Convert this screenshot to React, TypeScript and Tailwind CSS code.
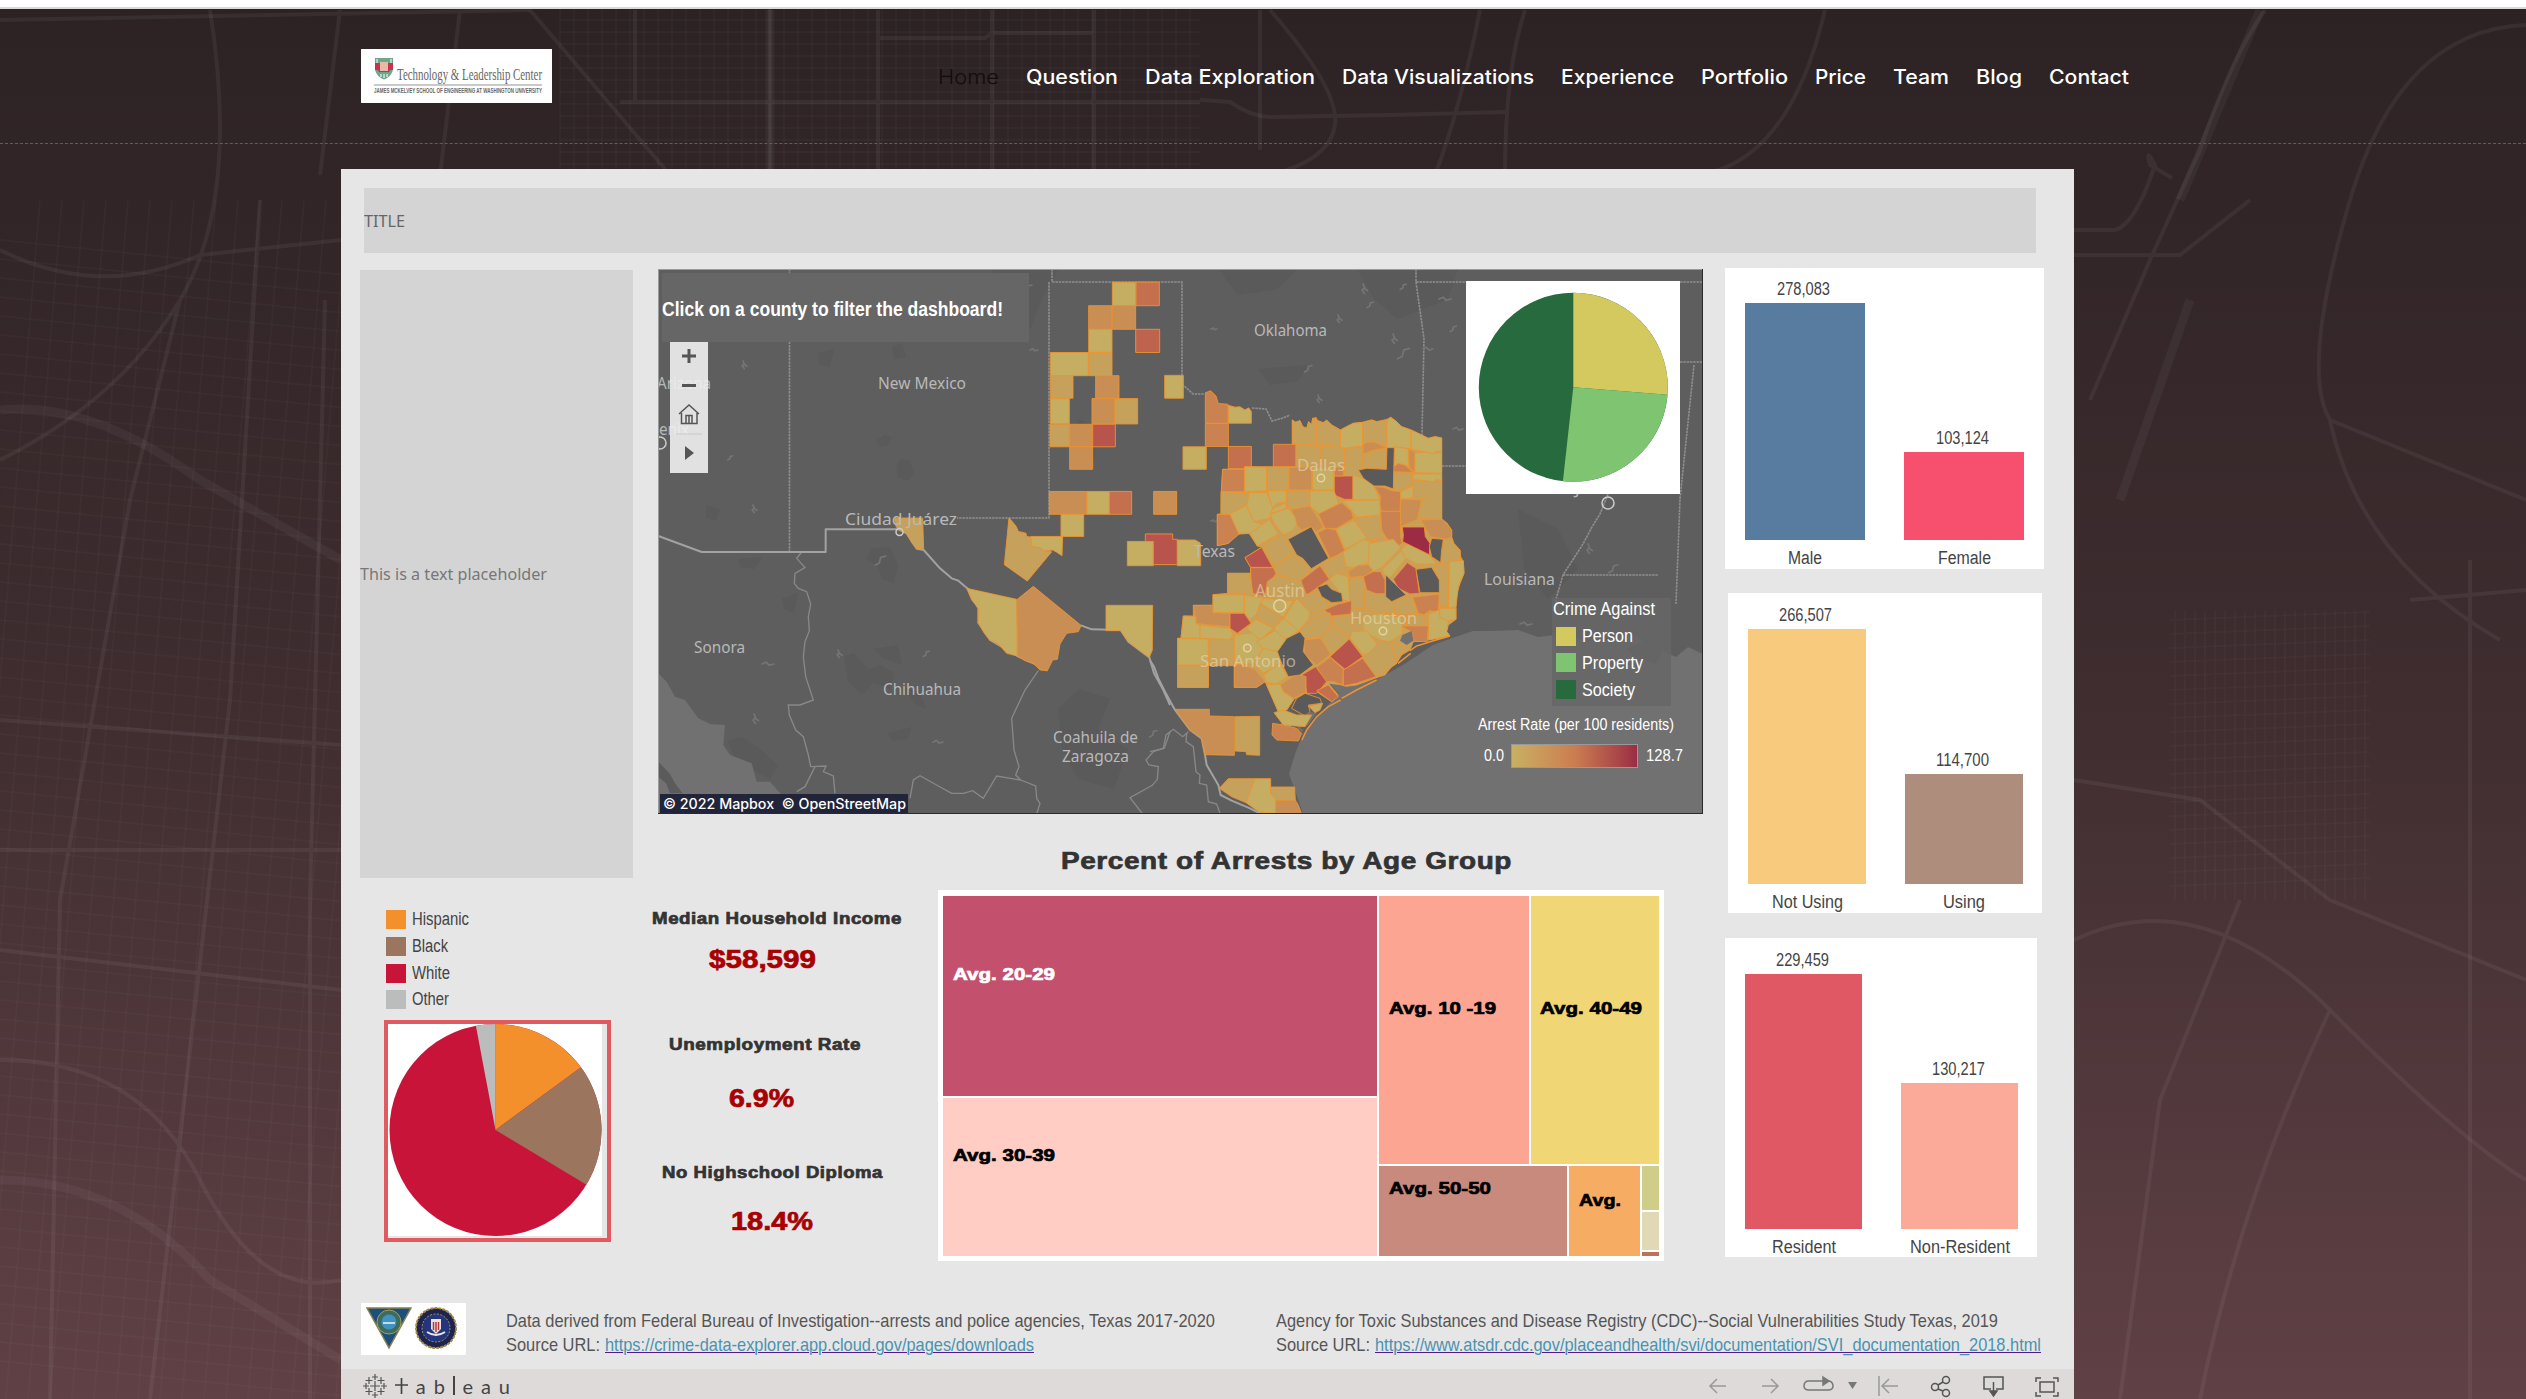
import { useLayoutEffect, useRef, useState, type ReactNode } from 'react';

/* A single text line squeezed or stretched to the width of its box. */
function Fit({ className = '', textClass = '', children }: { className?: string; textClass?: string; children: ReactNode }) {
  const box = useRef<HTMLDivElement>(null);
  const text = useRef<HTMLSpanElement>(null);
  const [scale, setScale] = useState(1);
  useLayoutEffect(() => {
    if (box.current && text.current && text.current.offsetWidth > 0) {
      setScale(box.current.getBoundingClientRect().width / text.current.getBoundingClientRect().width);
    }
  }, []);
  return (
    <div ref={box} className={`shrink-0 whitespace-nowrap ${className}`}>
      <span ref={text} className={`inline-block origin-left ${textClass}`} style={{ transform: `scaleX(${scale})` }}>
        {children}
      </span>
    </div>
  );
}

const Y = '#c5ad62';
const T = '#c6a15b';
const O = '#c98e53';
const P = '#c98250';
const R = '#c4704f';
const C = '#b8544c';
const D = '#9b2c44';

type Shape = [string, string];

const panhandle: Shape[] = [
  [Y, '337,62 407,62 407,128 337,128'],
  [R, '408,62 478,62 478,128 408,128'],
  [O, '266,128 336,128 336,194 266,194'],
  [O, '337,128 407,128 407,194 337,194'],
  [Y, '266,194 336,194 336,259 266,259'],
  ['#bf644c', '407,194 479,194 479,259 407,259'],
  [Y, '151,259 265,259 265,324 151,324'],
  [T, '266,259 336,259 336,324 266,324'],
  [T, '151,324 219,324 219,387 151,387'],
  [O, '287,324 357,324 357,387 287,387'],
  [Y, '494,323 550,323 550,387 494,387'],
  [Y, '151,388 208,388 208,459 151,459'],
  [O, '276,388 344,388 344,459 276,459'],
  [T, '345,388 413,388 413,459 345,459'],
  [T, '150,460 208,460 208,523 150,523'],
  [O, '209,460 277,460 277,523 209,523'],
  [C, '278,460 346,460 346,523 278,523'],
  [O, '209,523 278,523 278,586 209,586'],
  [Y, '549,523 619,523 619,586 549,586'],
  [R, '685,522 754,522 754,584 685,584'],
  [P, '616,457 616,372 632,366 648,381 655,402 684,404 684,457'],
  [Y, '685,407 705,412 720,411 735,420 746,414 754,424 754,457 685,457'],
  [P, '616,458 685,458 685,522 616,522'],
  [O, '148,648 260,648 260,712 148,712'],
  [Y, '261,648 328,648 328,712 261,712'],
  [R, '328,648 395,648 395,712 328,712'],
  [O, '461,648 530,648 530,712 461,712'],
  [Y, '183,712 251,712 251,774 183,774'],
  [T, '27,722 48,745 55,760 78,765 80,774 92,776 96,802 120,805 135,815 155,817 82,899 13,853'],
  [Y, '92,774 188,774 186,828 170,818 158,812 135,815 120,805 96,802'],
  [Y, '382,788 460,788 460,856 382,856'],
  [C, '436,767 518,767 518,782 532,782 532,853 460,853 460,788 436,788'],
  [Y, '532,784 585,784 600,792 602,800 602,856 532,856'],
];

const bigBend: Shape[] = [
  [T, '733,54 818,54 821,148 800,146 785,128 770,100 748,90 738,80'],
  [Y, '950,265 1100,298 1102,468 1070,460 1045,432 1020,420 1003,400 985,368 985,325 965,300'],
  [O, '1102,298 1150,259 1293,376 1285,395 1250,400 1230,432 1222,478 1208,480 1192,512 1170,510 1150,490 1125,482 1102,468'],
  [Y, '1368,316 1508,316 1507,450 1498,472 1470,452 1435,425 1412,392 1368,392'],
];

const eastBase =
  '427,120 437,127 450,122 458,140 470,145 476,125 485,135 488,115 499,113 503,125 520,128 530,120 545,135 571,150 590,140 610,130 638,127 665,120 680,125 711,118 722,112 740,125 755,140 783,150 815,165 835,175 855,170 875,174 875,418 890,428 905,450 905,470 912,490 930,510 932,530 940,545 942,580 930,610 918,650 918,718 895,735 890,755 900,768 835,780 790,785 780,810 755,825 740,850 725,860 705,885 680,893 620,915 580,920 535,910 565,945 545,965 500,935 470,940 430,958 410,990 385,995 350,915 345,905 320,922 253,922 253,857 175,857 175,922 83,922 83,775 93,775 100,708 130,708 130,676 189,676 189,644 233,640 233,580 302,580 302,562 285,533 335,502 322,498 297,460 262,463 235,490 202,497 202,403 213,402 214,335 218,268 284,268 284,260 427,260';

const east: Shape[] = [
  [T, '427,120 437,127 450,122 458,140 470,145 476,125 485,135 488,115 499,115 499,194 427,192'],
  [T, '499,120 520,128 530,122 545,135 571,150 571,198 499,194'],
  [Y, '571,150 590,140 610,130 638,127 638,198 571,206'],
  [T, '638,127 665,120 680,125 711,122 711,198 690,192 660,185 638,198'],
  [Y, '711,122 722,112 740,125 755,140 783,150 783,206 711,202'],
  [Y, '783,150 815,165 835,175 855,170 875,174 875,216 860,214 848,222 830,218 783,206'],
  [R, '370,193 438,193 438,260 370,260'],
  [T, '438,196 511,198 511,262 438,262'],
  [T, '511,198 583,204 583,268 511,262'],
  [T, '583,206 638,200 638,286 583,290'],
  [T, '638,235 655,222 675,212 711,205 709,267 638,267'],
  [O, '638,195 650,187 672,186 711,203 672,210 640,222'],
  [Y, '733,200 775,206 775,260 755,252 733,262'],
  [O, '775,208 795,215 795,278 778,262'],
  [Y, '795,220 830,216 848,222 875,216 875,280 795,278'],
  [P, '218,268 284,268 284,335 214,335'],
  [Y, '284,260 350,262 350,332 284,335'],
  [T, '350,262 417,262 417,330 350,330'],
  [O, '417,262 485,262 485,330 417,330'],
  [Y, '487,262 552,264 552,330 487,330'],
  [C, '553,288 609,288 609,358 583,358 553,345'],
  [P, '553,262 580,264 580,288 553,288'],
  [Y, '609,285 640,295 672,318 690,360 609,360'],
  [P, '730,262 745,250 765,256 790,277 730,275'],
  [T, '730,278 789,282 789,312 752,330 730,325'],
  [Y, '789,282 875,282 875,302 860,298 848,306 830,303 789,298'],
  [T, '789,300 830,303 848,306 875,302 875,358 835,360 789,350'],
  [P, '674,320 700,322 725,332 752,335 750,394 695,394 688,372 692,350'],
  [Y, '752,335 789,318 789,355 752,357'],
  [T, '213,336 298,338 298,370 240,402 213,402'],
  [P, '202,403 240,403 270,460 235,490 202,497'],
  [Y, '240,402 290,376 312,425 340,435 300,460 265,460'],
  [Y, '298,338 350,338 370,385 360,415 312,425 290,376'],
  [Y, '352,332 409,332 409,366 380,370 368,385'],
  [Y, '370,385 409,368 409,385 360,402'],
  [T, '411,332 480,332 480,378 430,388 411,385'],
  [Y, '480,332 552,332 566,370 510,402 480,380'],
  [O, '425,388 480,378 520,440 500,455 482,440 455,450 435,430'],
  [P, '505,402 575,368 605,395 610,415 560,445 525,445'],
  [Y, '575,362 690,360 690,405 620,412 600,385'],
  [T, '615,415 690,405 695,450 682,482 655,480 630,460'],
  [P, '692,394 752,394 752,470 757,490 740,500 710,475 695,450'],
  [O, '752,357 815,360 803,418 752,440'],
  [T, '815,360 875,358 875,418 803,416'],
  [O, '812,420 878,418 905,450 905,470 890,478 840,470 825,440'],
  [Y, '300,460 358,418 385,462 322,498'],
  [Y, '360,402 415,385 435,410 440,435 428,450 400,465 372,430'],
  [T, '342,492 400,462 430,520 370,558'],
  [T, '372,556 432,525 455,555 480,567 452,605 378,580'],
  [C, '285,533 335,502 368,562 302,562'],
  [R, '302,563 370,563 378,580 352,625 345,650 308,640 303,610'],
  [P, '503,458 530,445 558,450 585,515 540,535'],
  [Y, '558,447 612,420 650,475 585,508'],
  [Y, '580,515 640,478 660,485 658,550 610,562 583,560'],
  [Y, '658,490 730,478 752,503 695,562 665,576 655,550'],
  [T, '518,555 578,515 590,575 555,612 535,590'],
  [O, '594,575 625,556 655,555 668,570 650,588 600,592'],
  [Y, '697,568 755,512 768,535 722,592 705,588'],
  [Y, '752,510 772,492 800,505 838,524 860,552 800,552 768,535'],
  [D, '757,441 823,441 826,470 840,490 838,524 805,508 758,485 760,465'],
  [T, '880,490 895,478 930,510 932,540 880,548'],
  [Y, '898,545 940,542 942,580 925,620 918,680 895,685'],
  [T, '850,555 895,550 895,680 868,680 868,600'],
  [C, '730,598 772,548 798,565 808,640 780,642 745,625'],
  [R, '640,590 670,575 692,575 705,600 705,642 680,642 650,630'],
  [R, '452,602 510,557 538,598 470,645'],
  [Y, '538,598 560,580 595,590 600,665 580,660 560,625'],
  [T, '598,595 640,592 645,685 612,685 598,660'],
  [T, '645,640 707,642 730,670 735,705 690,695 645,692'],
  [T, '730,672 785,642 802,705 740,705'],
  [P, '788,652 868,642 865,695 838,692 822,705 805,700'],
  [R, '523,690 565,672 605,662 603,702 545,708'],
  [Y, '835,702 868,690 870,712 895,722 890,755 900,768 835,780'],
  [Y, '868,685 918,685 918,718 895,722 870,712'],
  [T, '770,705 822,705 822,738 770,738'],
  [P, '752,738 835,738 832,784 790,785 785,755'],
  [Y, '640,712 690,700 755,712 757,760 720,785 690,780 640,755'],
  [T, '233,580 300,580 308,640 233,640'],
  [Y, '189,644 283,644 283,698 189,698'],
  [Y, '283,645 340,655 320,700 300,720 283,700'],
  [O, '130,676 189,676 189,698 240,700 240,740 180,735 138,730'],
  [C, '240,700 283,700 303,730 262,760 240,745'],
  [Y, '100,708 138,710 138,730 150,735 150,775 93,775'],
  [Y, '150,735 240,745 250,765 235,785 225,778 150,775'],
  [Y, '83,775 175,777 175,855 83,855'],
  [T, '175,778 253,778 253,855 175,855'],
  [Y, '253,765 312,758 340,800 315,850 253,855'],
  [T, '83,857 175,857 175,922 83,922'],
  [O, '253,857 270,852 315,868 345,905 320,922 253,922'],
  [T, '352,605 380,585 455,605 455,655 430,665 345,655'],
  [Y, '343,655 430,662 400,712 330,670'],
  [T, '330,670 395,710 372,745 318,715'],
  [Y, '440,655 482,692 475,720 445,755 402,715'],
  [Y, '318,718 370,745 330,780 290,745'],
  [Y, '372,745 402,715 445,752 410,780 390,770'],
  [Y, '320,785 375,752 410,780 380,815 340,808'],
  [Y, '312,850 340,805 385,815 400,845 340,880'],
  [Y, '340,885 390,848 412,890 380,912 350,908'],
  [T, '440,655 495,635 520,660 540,668 523,690 482,700'],
  [O, '460,780 510,775 545,820 500,855 465,825'],
  [T, '445,752 480,720 540,698 545,735 510,775 465,775'],
  [T, '515,775 545,735 598,775 545,830'],
  [C, '540,830 598,777 638,830 585,868'],
  [T, '545,710 603,705 612,750 600,775 548,735'],
  [Y, '605,755 650,752 680,790 672,815 640,825 600,775'],
  [T, '640,835 690,785 722,785 740,850 680,893 645,865'],
  [T, '722,785 765,800 755,825 738,840'],
  [P, '500,862 540,832 580,868 578,915 550,905 525,905'],
  [R, '580,870 638,835 678,890 620,910 580,918'],
  [C, '455,885 497,860 530,905 500,940 470,940 465,905'],
  [O, '390,915 440,882 468,890 468,935 430,955 400,935'],
  [R, '500,932 535,915 565,950 545,965'],
  [Y, '350,915 390,912 400,935 432,958 410,990 385,995'],
];

const holes = [
  '711,203 733,203 730,327 705,318 672,318 640,295 625,270 650,265 709,268',
  '414,478 484,440 536,535 484,566 458,535 440,525',
  '845,475 880,478 875,510 872,548 845,530 838,500',
  '798,568 845,562 868,600 868,638 810,638',
  '707,585 735,612 768,645 725,665 707,650',
  '502,622 530,612 545,628 575,640 578,665 545,668 515,650',
  '382,815 410,775 450,755 465,775 460,815 490,855 450,885 415,890 395,850',
  '425,985 440,955 465,940 510,955 515,970 475,975 480,995 465,1008',
];

const south: Shape[] = [
  [Y, '475,978 518,970 510,990 495,998'],
  [Y, '372,998 400,990 440,1005 485,1005 465,1040 400,1035'],
  [P, '368,1030 400,1035 440,1045 455,1060 445,1083 380,1080 366,1065'],
  [O, '75,988 178,988 178,1008 253,1010 253,1126 165,1124 155,1075 120,1050'],
  [T, '255,1010 329,1009 329,1126 290,1124 288,1115 255,1113'],
  [T, '208,1225 235,1196 315,1196 288,1268 245,1250'],
  [Y, '315,1196 362,1196 362,1240 378,1248 376,1300 330,1298 288,1268'],
  [T, '362,1221 434,1221 436,1262 378,1260 362,1240'],
  [O, '378,1262 436,1260 445,1275 455,1302 376,1302'],
];

function Shapes({ list }: { list: Shape[] }) {
  return (
    <g stroke="#ee942f" strokeWidth="2.600" strokeLinejoin="round">
      {list.map(([fill, points], i) => (
        <polygon key={i} fill={fill} points={points} />
      ))}
    </g>
  );
}

const mapLabels: [string, number, number, number, number][] = [
  ['New Mexico', 220, 120, 88, 16],
  ['Arizona', -1, 120, 54, 16],
  ['enix', 1, 166, 30, 17],
  ['Ciudad Juárez', 187, 256, 112, 17],
  ['Sonora', 36, 384, 51, 16],
  ['Chihuahua', 225, 426, 78, 16],
  ['Coahuila de', 395, 474, 85, 16],
  ['Zaragoza', 404, 493, 67, 16],
  ['Oklahoma', 596, 67, 73, 16],
  ['Texas', 536, 288, 41, 16],
  ['Louisiana', 826, 316, 71, 16],
  ['Jackson', 917, 225, 62, 17],
];

const cityLabels: [string, number, number, number, number][] = [
  ['Dallas', 639, 202, 48, 17],
  ['Austin', 597, 328, 50, 18],
  ['Houston', 692, 355, 67, 17],
  ['San Antonio', 542, 398, 96, 17],
];

const specks: [number, number, number][] = [
  [370, 16, 4], [705, 20, 5], [745, 18, 4], [787, 30, 6], [735, 70, 5], [745, 85, 8], [770, 80, 5], [660, 130, 4],
  [650, 100, 5], [556, 60, 3], [95, 240, 4], [222, 292, 7], [110, 395, 6], [96, 450, 5], [268, 385, 4], [280, 473, 5],
  [180, 385, 4], [495, 465, 5], [630, 455, 7], [640, 460, 5], [795, 60, 4], [800, 160, 5], [930, 280, 5], [955, 300, 6], [868, 355, 6],
  [85, 96, 4], [72, 189, 3], [376, 81, 4], [680, 50, 4], [712, 36, 4], [556, 252, 3], [500, 228, 3],
];

function TexasMap() {
  return (
    <svg className="block h-full w-full" viewBox="0 0 1045 545">
      <rect width="1045" height="545" fill="#5e5e5e" />
      <g fill="#585858" opacity=".6">
        <path d="M242 190L252 192L256 204L250 212L240 208L238 198zM218 172L226 166L234 168L230 176L222 178zM160 84L176 80L172 98L162 96zM234 78L244 74L248 88L236 90z" />
        <path d="M214 280L232 278L240 296L236 314L224 310L220 298L208 290zM250 250L258 256L256 264L246 260zM80 290L104 288L96 300L82 298z" />
        <path d="M186 388L196 384L210 400L222 396L236 404L232 420L216 414L204 426L190 412zM216 380L240 376L244 396L226 390zM246 418L262 424L268 440L256 434z" />
        <path d="M70 472L84 468L102 480L120 496L112 510L92 500L76 488zM230 464L254 458L250 470L234 472zM124 330L140 324L136 344L126 340z" />
        <path d="M48 236L62 240L58 252L48 248zM332 0H400L384 30L372 60L360 30zM420 150L440 160L436 190L418 176z" />
        <path d="M560 0H640L620 20L580 26zM700 0H800L790 30L740 50L716 30zM600 100L650 96L640 112L612 116z" />
        <path d="M400 440L420 420L452 430L440 460L470 480L456 520L420 510L404 480zM860 240L900 260L920 300L890 330L866 300z" />
      </g>
      <g transform="translate(-8 231) scale(.33333)">
        <path d="M25 520L50 545L75 590L105 600L145 655L180 672L225 675L220 735L240 765L305 790L320 845L360 845L395 885V945H25z" fill="#717171" />
        <path d="M25 785L60 822L75 850L98 880H60L48 850L25 830z" fill="#5b5b5b" />
      </g>
      <path
        d="M1045 385L1030 378L1018 388L1005 382L998 395L980 390L968 380L985 372L975 366L950 372L930 372L905 365L880 368L860 361L832 362L815 362L797 368L775 376L745 396L720 410L690 416L660 446L645 465L637 485L631 505L637 521L645 545H1045z"
        fill="#717171"
      />
      <g fill="none" stroke="#8e8e8e" strokeWidth="1.6" strokeDasharray="2.5 .8">
        <path d="M131.5 0V283" />
        <path d="M394 0V13H524V115M391 13V249H299" />
        <path d="M524 115L535 125L546 125M594 139L608 140L614 152L625 149L632 146" />
        <path d="M758 0V13H808M758 13L766 70L764 166M784 197H808M1022 13H1045M1022 93H1045" />
        <path d="M1036 96L1022 230L1018 335M905 306H1000" />
        <path d="M950 225L942 245L934 258L925 275L905 306L898 330L902 346" />
      </g>
      <g fill="none" stroke="#888" strokeWidth="1.4">
        <g transform="translate(-8 231) scale(.33333)" strokeWidth="4">
          <path d="M455 156L440 175L465 203L435 220L433 250L445 265L470 275L482 312L475 350L478 392L465 425L460 470L467 530L490 600L450 615L415 615L418 645L437 690L460 710L475 765L482 800L528 798L520 815L550 828L555 880" />
          <path d="M495 800L465 860L440 875" />
          <path d="M1165 512L1125 570L1085 655L1092 750L1107 800L1097 825L1112 840L1157 858L1160 895L1170 910L1160 942" />
          <path d="M780 895L790 840L810 827L865 858L905 880L940 880L968 872L1000 895L1040 828L1112 840" />
          <path d="M1560 695L1543 745L1510 755L1488 780L1497 795L1525 800L1522 838L1507 856L1440 893L1478 942" />
        </g>
        <g transform="translate(492 111) scale(.33333)" strokeWidth="4">
          <path d="M0 1115L40 1105L48 1065L70 1048L98 1070L115 1055M110 1060L108 1085L130 1100L138 1175L150 1185L148 1210L170 1215L175 1265L200 1272L210 1300" />
        </g>
      </g>
      <g fill="none" stroke="#a2a2a2" strokeWidth="1.9" strokeLinejoin="round">
        <g transform="translate(-8 231) scale(.33333)" strokeWidth="6">
          <path d="M25 108L155 156H527V88H745L770 100L800 146L821 150L870 205L905 235L925 242L955 268L985 325V368L1020 420L1102 468L1150 490L1192 512" />
          <path d="M1293 376L1325 388L1412 390L1435 425L1498 472L1512 520L1540 570L1560 615" />
        </g>
        <g transform="translate(492 111) scale(.33333)" strokeWidth="6">
          <path d="M0 842L12 860L25 895L45 935L75 990L120 1050L155 1075L165 1125L170 1155L205 1215L212 1245L245 1262L300 1285L330 1300" />
        </g>
      </g>
      <g fill="none" stroke="#757575" strokeWidth="1.7" strokeLinecap="round">
        {specks.map(([x, y, r], i) => (
          <path
            key={i}
            d={
              i % 3 === 0
                ? `M${x - r} ${y}l${r * 0.7} ${-r * 0.3}l${r * 0.5} ${r * 0.5}l${r * 0.8} ${-r * 0.2}`
                : i % 3 === 1
                  ? `M${x} ${y - r}l${r * 0.3} ${r * 0.7}l${-r * 0.5} ${r * 0.5}l${r * 0.5} ${r * 0.7}M${x + 2} ${y}l${r * 0.5} ${r * 0.3}`
                  : `M${x - r * 0.7} ${y + r * 0.6}l${r * 0.6} ${-r * 0.3}l${r * 0.2} ${-r * 0.8}l${r * 0.7} ${-r * 0.2}`
            }
          />
        ))}
      </g>
      <g transform="translate(342 -9) scale(.33333 .35714)">
        <Shapes list={panhandle} />
      </g>
      <g transform="translate(-8 231) scale(.33333)">
        <Shapes list={bigBend} />
      </g>
      <g transform="translate(492 111) scale(.33333)">
        <polygon points={eastBase} fill={T} stroke="#ee942f" strokeWidth="2.600" />
        <Shapes list={east} />
        <g fill="#5a5a5a" stroke="#ee942f" strokeWidth="2.600" strokeLinejoin="round">
          {holes.map((points, i) => (
            <polygon key={i} points={points} />
          ))}
        </g>
        <path d="M757 765L785 753L790 782L770 795L750 782zM465 1005L480 995L500 1000L470 1040zM540 912L570 915L600 925L575 945L560 935z" fill="#717171" />
        <Shapes list={south} />
        <path
          d="M456 1080L470 1050L500 1010L535 980L572 960M575 955L620 930L680 900M744 850L782 820M780 812L800 798L845 784L900 768"
          fill="none"
          stroke="#f0922f"
          strokeWidth="4.500"
        />
      </g>
      <g fill="none" stroke="#e3d3a6" strokeWidth="1.5">
        <circle cx="663" cy="209" r="3.7" />
        <circle cx="621.700" cy="336.700" r="6" />
        <circle cx="725" cy="362" r="3.800" />
        <circle cx="589.300" cy="379" r="3.700" />
        <circle cx="241.500" cy="263" r="3.500" stroke="#ccc" />
        <circle cx="950" cy="234" r="6" stroke="#ccc" />
        <circle cx="2" cy="174" r="6" stroke="#ccc" />
      </g>
      <g fontFamily="Noto Sans, sans-serif">
        <g fill="#b9b9b9">
          {mapLabels.map(([text, x, y, w, size]) => (
            <text key={text} x={x} y={y} fontSize={size} textLength={w} lengthAdjust="spacingAndGlyphs">
              {text}
            </text>
          ))}
        </g>
        <g fill="#e6d9b4" fillOpacity=".62">
          {cityLabels.map(([text, x, y, w, size]) => (
            <text key={text} x={x} y={y} fontSize={size} textLength={w} lengthAdjust="spacingAndGlyphs">
              {text}
            </text>
          ))}
        </g>
      </g>
      <path d="M0 .5H1045M.5 0V545" stroke="#9a9a9a" fill="none" />
      <path d="M1044.500 0V545M0 544.500H1045" stroke="#2a2a2a" fill="none" />
    </svg>
  );
}

function Backdrop() {
  const lines: ReactNode[] = [];
  for (let i = 0; i < 46; i++) {
    lines.push(<path key={`v${i}`} d={`M${560 + i * 14} 0V175`} />);
  }
  for (let i = 0; i < 13; i++) {
    lines.push(<path key={`h${i}`} d={`M560 ${20 + i * 12}H1200`} />);
  }
  for (let i = 0; i < 60; i++) {
    lines.push(<path key={`l${i}`} d={`M0 ${240 + i * 19}L345 ${275 + i * 19}`} />);
  }
  for (let i = 0; i < 20; i++) {
    lines.push(<path key={`m${i}`} d={`M${-60 + i * 22} 1399L${40 + i * 22} 200`} />);
    lines.push(<path key={`r${i}`} d={`M2170 ${620 + i * 14}L2370 ${612 + i * 14}M${2175 + i * 10} 610V900`} />);
  }
  return (
    <svg className="absolute inset-0 h-full w-full" viewBox="0 0 2526 1399" fill="none" stroke="#fff">
      <g strokeOpacity=".022" strokeWidth="2">{lines}</g>
      <g strokeOpacity=".055" strokeWidth="4">
        <path d="M770 0V175M530 10L670 175M620 102H1200M880 38H985L992 33H1095M878 10V175M992 10V175M1094 10V175" />
        <path d="M340 10L320 175M460 10L440 175M0 20L530 10M635 10V100" />
        <path d="M1270 10Q1340 90 1335 125T1270 175M1200 100L1230 102Q1250 116 1270 117L1390 115L1505 112M1480 10Q1460 110 1435 175M1525 10Q1505 70 1505 175" />
        <path d="M1825 10Q1790 160 1700 175M1260 10V150" />
        <path d="M2265 10Q2230 60 2200 150L2150 260L2090 400M2074 255H2180L2250 200M2074 230H2115Q2135 225 2155 165Q2145 145 2150 165L2172 178" />
        <path d="M2526 25Q2400 30 2350 200T2330 420Q2360 560 2500 640M2526 500L2330 420M2470 560V1399M2410 600L2526 590" />
        <path d="M2074 780L2200 800L2330 900L2526 980M2074 940Q2200 880 2330 1010T2526 1180M2200 1399Q2240 1200 2330 1010M2120 1399L2160 1100L2240 900" />
        <path d="M0 250Q100 300 200 255L341 240M0 460Q120 400 180 300T210 10M50 1399L60 900L130 500L180 300M0 720L341 745M0 850H341M0 1060Q140 1060 200 1180T341 1280M150 1399L230 700L260 200M0 950L341 990M310 1399V900L325 300" />
      </g>
      <g strokeOpacity=".045" strokeWidth="9">
        <path d="M770 10V175M2260 10L2180 200M2190 300L2120 500" />
        <path d="M0 410Q90 400 200 480L341 560M0 1180Q120 1180 210 1280L341 1360" />
      </g>
    </svg>
  );
}

const nav: [string, string][] = [
  ['Question', 'w-[92px]'],
  ['Data Exploration', 'w-[170px]'],
  ['Data Visualizations', 'w-[192px]'],
  ['Experience', 'w-[113px]'],
  ['Portfolio', 'w-[87px]'],
  ['Price', 'w-[51px]'],
  ['Team', 'w-[56px]'],
  ['Blog', 'w-[46px]'],
  ['Contact', 'w-[80px]'],
];

type Bar = { value: string; vw: string; name: string; nw: string; height: number; color: string };

function BarCard({ className, bar, bars }: { className: string; bar: string; bars: Bar[] }) {
  return (
    <div className={`flex items-end gap-[39px] bg-white font-['Liberation_Sans'] text-[18px] leading-[20px] text-[#444] ${className}`}>
      {bars.map((b) => (
        <div key={b.name} className={`flex flex-col items-center ${bar}`}>
          <Fit className={`mr-[3px] mb-[4px] ${b.vw}`}>{b.value}</Fit>
          <div className="w-full" style={{ height: b.height, backgroundColor: b.color }} />
          <Fit className={`mt-[8px] ${b.nw}`}>{b.name}</Fit>
        </div>
      ))}
    </div>
  );
}

function Swatch({ color, label, width, row }: { color: string; label: string; width: string; row: string }) {
  return (
    <div className={`flex items-center ${row}`}>
      <div className={`h-[19px] w-[20px] shrink-0 ${color}`} />
      <Fit className={`ml-[6px] ${width}`}>{label}</Fit>
    </div>
  );
}

function TableauMark() {
  const pts: [number, number, number][] = [
    [12, 12, 5], [12, 3, 3], [12, 21, 3], [3, 12, 3], [21, 12, 3], [6, 6.5, 3.500], [18, 6.500, 3.500], [6, 17.500, 3.500], [18, 17.500, 3.500],
  ];
  return (
    <svg className="h-[24px] w-[24px]" viewBox="0 0 24 24" stroke="#555" strokeWidth="1.2">
      {pts.map(([x, y, r], i) => (
        <path key={i} d={`M${x - r} ${y}H${x + r}M${x} ${y - r}V${y + r}`} />
      ))}
    </svg>
  );
}

const heavy = '[-webkit-text-stroke:0.7px_currentColor]';

export default function App() {
  return (
    <div className="relative h-[1399px] w-[2526px] overflow-hidden bg-gradient-to-b from-[#2c2224] via-[#3f2d30] to-[#604145]">
      <Backdrop />
      <div className="relative flex h-full flex-col">
        <div className="h-[9px] shrink-0 border-b-2 border-[#d9d9d9] bg-white" />
        <header className="flex h-[135px] shrink-0 items-start border-b border-dashed border-[#665a5d]">
          <div className="mt-[40px] ml-[361px] flex h-[54px] w-[191px] shrink-0 flex-col bg-white pt-[8px] pl-[13px]">
            <div className="flex h-[24px] items-start">
              <svg className="h-[23px] w-[20px]" viewBox="0 0 20 23">
                <path d="M1 1H19V13Q17 20 10 22.500Q3 20 1 13z" fill="#6fa58d" />
                <path d="M1 6H19V13H16L15 15H5L4 13H1z" fill="#c2334d" />
                <path d="M6 5H14V14H6z" fill="#e9b9a8" />
                <path d="M3 2V6M17 2V6M7 17V20M10 17V21M13 17V20" stroke="#fff" />
              </svg>
              <Fit className="mt-[9px] ml-[3px] w-[145px] font-['Liberation_Serif'] text-[16px] leading-[18px] text-[#666]">Technology &amp; Leadership Center</Fit>
            </div>
            <div className="mt-[3px] h-[2px] w-[168px] bg-[#c9c9c9]" />
            <Fit className="w-[168px] font-['Liberation_Sans'] text-[7px] leading-[9px] font-bold text-[#666]">JAMES MCKELVEY SCHOOL OF ENGINEERING AT WASHINGTON UNIVERSITY</Fit>
          </div>
          <nav className="mt-[54px] ml-[386px] flex gap-[27px] font-[Inter] text-[20px] leading-[28px] font-medium text-white">
            <Fit className="w-[61px] font-light text-[#120c0e]">Home</Fit>
            {nav.map(([label, w]) => (
              <Fit key={label} className={w}>
                {label}
              </Fit>
            ))}
          </nav>
        </header>

        <main className="mt-[25px] ml-[341px] flex h-[1200px] w-[1733px] shrink-0 flex-col bg-[#e6e6e6] pt-[19px]">
          <div className="ml-[23px] flex h-[65px] w-[1672px] shrink-0 items-center bg-[#d4d4d4] font-['Noto_Sans'] text-[16px] text-[#666]">
            <Fit className="w-[41px]">TITLE</Fit>
          </div>

          <div className="mt-[15px] flex h-[1000px] shrink-0">
            <aside className="ml-[19px] flex w-[273px] shrink-0 flex-col pt-[2px]">
              <div className="flex h-[608px] items-center bg-[#d4d4d4] font-['Noto_Sans'] text-[16px] text-[#777]">
                <Fit className="w-[187px]">This is a text placeholder</Fit>
              </div>
              <div className="mt-[28px] ml-[26px] font-['Liberation_Sans'] text-[18px] text-[#444]">
                <Swatch row="h-[27px]" color="bg-[#f4902c]" label="Hispanic" width="w-[57px]" />
                <Swatch row="h-[27px]" color="bg-[#9c755f]" label="Black" width="w-[36px]" />
                <Swatch row="h-[26px]" color="bg-[#c81439]" label="White" width="w-[38px]" />
                <Swatch row="h-[27px]" color="bg-[#bbbdbc]" label="Other" width="w-[37px]" />
              </div>
              <div className="mt-[7px] ml-[24px] h-[222px] w-[227px] border-4 border-[#e15a60]">
                <svg className="block h-[212px] w-[214px] bg-white" viewBox="-107.500 -106 214 212">
                  <circle r="106" fill="#c81439" />
                  <path d="M0 0V-106A106 106 0 0 1 85.500 -62.700z" fill="#f4902c" />
                  <path d="M0 0L85.500 -62.700A106 106 0 0 1 91 54.700z" fill="#9c755f" />
                  <path d="M0 0L-19.600 -104.200A106 106 0 0 1 0 -106z" fill="#bbbdbc" />
                </svg>
              </div>
            </aside>

            <section className="ml-[25px] flex w-[1045px] shrink-0 flex-col pt-px">
              <div className="relative h-[545px] shrink-0">
                <TexasMap />
                <div className="absolute top-[4px] left-[4px] flex h-[69px] w-[367px] items-center bg-[#666] font-['Liberation_Sans'] text-[20px] font-bold text-white">
                  <Fit className="w-[341px] pt-[2px]">Click on a county to filter the dashboard!</Fit>
                </div>
                <svg className="absolute top-[73px] left-[12px] h-[131px] w-[38px] bg-[#f0f0f0]/90" viewBox="0 0 38 131" fill="none" stroke="#555">
                  <path d="M12 14H26M19 7V21M12 43.500H26" strokeWidth="3" />
                  <path d="M9 72L19 63L29 72M11.500 71V81.500H27V71M16 81V73.500H22V81M19 74V81" strokeWidth="1.500" />
                  <path d="M6 92H32" stroke="#c8c8c8" />
                  <path d="M15 104V118L24 111z" fill="#555" stroke="none" />
                </svg>
                <div className="absolute top-[12px] left-[808px] h-[213px] w-[214px] bg-white">
                  <svg className="block h-full w-full" viewBox="-107.300 -106.300 214 213">
                    <circle r="94.500" fill="#276a3e" />
                    <path d="M0 0V-94.500A94.500 94.500 0 0 1 94.200 7.400z" fill="#d4c95e" />
                    <path d="M0 0L94.200 7.400A94.500 94.500 0 0 1 -10.400 93.900z" fill="#7fc471" />
                  </svg>
                </div>
                <div className="absolute top-[329px] left-[894px] h-[108px] w-[119px] bg-[#666]/80 pt-[1px] pl-[1px] font-['Liberation_Sans'] text-[18px] leading-[20px] text-white">
                  <Fit className="w-[102px]">Crime Against</Fit>
                  <div className="mt-[4px] ml-[3px]">
                    <Swatch row="h-[26px]" color="bg-[#d4c95e]" label="Person" width="w-[51px]" />
                    <Swatch row="h-[27px]" color="bg-[#7fc471]" label="Property" width="w-[61px]" />
                    <Swatch row="h-[27px]" color="bg-[#276a3e]" label="Society" width="w-[53px]" />
                  </div>
                </div>
                <div className="absolute top-[446px] left-[820px] font-['Liberation_Sans'] text-[16px] leading-[20px] text-white">
                  <Fit className="w-[196px]">Arrest Rate (per 100 residents)</Fit>
                  <div className="mt-[9px] ml-[6px] flex items-center">
                    <Fit className="w-[20px]">0.0</Fit>
                    <div className="mx-[7px] h-[24px] w-[127px] border border-[#999] bg-gradient-to-r from-[#c8b062] via-[#cb7d50] to-[#9b2c44]" />
                    <Fit className="ml-[1px] w-[37px]">128.7</Fit>
                  </div>
                </div>
                <div className="absolute top-[525px] left-[2px] flex h-[19px] w-[248px] items-center bg-[#22253a] pl-[3px] font-[Inter] text-[14px] font-medium text-white">
                  <Fit className="w-[243px]">© 2022 Mapbox&nbsp; © OpenStreetMap</Fit>
                </div>
              </div>

              <div className="flex">
                <div className="flex w-[280px] shrink-0 flex-col pt-[95px] font-['Liberation_Sans'] font-bold">
                  <Fit className="ml-[-6px] h-[20px] w-[250px] text-[16px] leading-[20px] tracking-[0.5px] text-[#333]" textClass={heavy}>Median Household Income</Fit>
                  <Fit className="mt-[16px] ml-[51px] h-[28px] w-[107px] text-[25px] leading-[28px] text-[#a80000]" textClass={heavy}>$58,599</Fit>
                  <Fit className="mt-[62px] ml-[11px] h-[20px] w-[192px] text-[16px] leading-[20px] tracking-[0.5px] text-[#333]" textClass={heavy}>Unemployment Rate</Fit>
                  <Fit className="mt-[29px] ml-[71px] h-[28px] w-[65px] text-[25px] leading-[28px] text-[#a80000]" textClass={heavy}>6.9%</Fit>
                  <Fit className="mt-[51px] ml-[4px] h-[20px] w-[221px] text-[16px] leading-[20px] tracking-[0.5px] text-[#333]" textClass={heavy}>No Highschool Diploma</Fit>
                  <Fit className="mt-[24px] ml-[73px] h-[28px] w-[82px] text-[25px] leading-[28px] text-[#a80000]" textClass={heavy}>18.4%</Fit>
                </div>
                <div className="flex flex-col">
                  <Fit className="mt-[32px] ml-[123px] h-[30px] w-[451px] font-['Liberation_Sans'] text-[24px] leading-[30px] font-bold tracking-[0.5px] text-[#333]" textClass={heavy}>Percent of Arrests by Age Group</Fit>
                  <div className="mt-[14px] flex h-[371px] w-[726px] gap-[2px] bg-white px-[5px] pt-[6px] pb-[5px] font-['Liberation_Sans'] text-[17px] leading-[20px] font-bold text-black">
                    <div className="flex w-[434px] flex-col gap-[2px]">
                      <div className="h-[200px] bg-[#c3506d] pt-[69px] pl-[10px] text-white">
                        <Fit className="w-[102px]" textClass={heavy}>Avg. 20-29</Fit>
                      </div>
                      <div className="flex-1 bg-[#ffcdc3] pt-[48px] pl-[10px]">
                        <Fit className="w-[102px]" textClass={heavy}>Avg. 30-39</Fit>
                      </div>
                    </div>
                    <div className="flex flex-1 flex-col gap-[2px]">
                      <div className="flex h-[268px] gap-[2px]">
                        <div className="w-[150px] bg-[#fba592] pt-[103px] pl-[10px]">
                          <Fit className="w-[107px]" textClass={heavy}>Avg. 10 -19</Fit>
                        </div>
                        <div className="flex-1 bg-[#f1d675] pt-[103px] pl-[9px]">
                          <Fit className="w-[102px]" textClass={heavy}>Avg. 40-49</Fit>
                        </div>
                      </div>
                      <div className="flex flex-1 gap-[2px]">
                        <div className="w-[188px] bg-[#c98a7e] pt-[13px] pl-[10px]">
                          <Fit className="w-[102px]" textClass={heavy}>Avg. 50-50</Fit>
                        </div>
                        <div className="w-[71px] bg-[#f6ad63] pt-[25px] pl-[10px]">
                          <Fit className="w-[42px]" textClass={heavy}>Avg.</Fit>
                        </div>
                        <div className="flex flex-1 flex-col gap-[2px]">
                          <div className="h-[44px] bg-[#cfcd87]" />
                          <div className="flex-1 bg-[#e1d9b6]" />
                          <div className="h-[4px] bg-[#c07058]" />
                        </div>
                      </div>
                    </div>
                  </div>
                </div>
              </div>
            </section>

            <aside className="ml-[22px] flex w-[319px] shrink-0 flex-col">
              <BarCard
                bar="w-[120px]"
                className="h-[301px] w-[319px] pb-[1px] pl-[20px]"
                bars={[
                  { value: '278,083', vw: 'w-[53px]', name: 'Male', nw: 'w-[34px]', height: 237, color: '#587ca0' },
                  { value: '103,124', vw: 'w-[53px]', name: 'Female', nw: 'w-[53px]', height: 88, color: '#f7506e' },
                ]}
              />
              <BarCard
                bar="w-[118px]"
                className="mt-[24px] ml-[3px] h-[320px] w-[314px] pb-[1px] pl-[20px]"
                bars={[
                  { value: '266,507', vw: 'w-[53px]', name: 'Not Using', nw: 'w-[71px]', height: 255, color: '#f7ca7e' },
                  { value: '114,700', vw: 'w-[53px]', name: 'Using', nw: 'w-[42px]', height: 110, color: '#ae8d7c' },
                ]}
              />
              <BarCard
                bar="w-[117px]"
                className="mt-[25px] h-[319px] w-[312px] pl-[20px]"
                bars={[
                  { value: '229,459', vw: 'w-[53px]', name: 'Resident', nw: 'w-[64px]', height: 255, color: '#e05864' },
                  { value: '130,217', vw: 'w-[53px]', name: 'Non-Resident', nw: 'w-[100px]', height: 146, color: '#fbaa99' },
                ]}
              />
            </aside>
          </div>

          <footer className="mt-[35px] flex font-['Liberation_Sans'] text-[19px] leading-[24px] text-[#555]">
            <div className="ml-[20px] flex h-[52px] w-[105px] shrink-0 items-start gap-[2px] bg-white pt-[2px] pl-[5px]">
              <svg className="h-[46px] w-[46px]" viewBox="0 0 46 46">
                <path d="M1 3H45L23 43z" fill="#1d4f7d" stroke="#8a8350" strokeWidth="1.500" />
                <circle cx="23" cy="17" r="12" fill="#3e6b5c" stroke="#a59b60" />
                <circle cx="23" cy="17" r="7.500" fill="#3f93c4" />
                <path d="M17 18H29" stroke="#c8dcd8" strokeWidth="2" />
              </svg>
              <svg className="h-[46px] w-[44px]" viewBox="0 0 44 46">
                <circle cx="22" cy="23" r="20" fill="#1d2450" stroke="#a68b45" strokeWidth="2" strokeDasharray="3 1" />
                <circle cx="22" cy="23" r="14" fill="#24357e" stroke="#b29a4e" strokeDasharray="2 1.500" />
                <path d="M17 14H27V24L22 29L17 24z" fill="#e9e2dc" />
                <path d="M19.500 17V25M22 17V27M24.500 17V25" stroke="#b5373c" strokeWidth="1.500" />
                <path d="M13 27Q22 33 31 27" stroke="#e5e5e5" strokeWidth="2" fill="none" />
              </svg>
            </div>
            <div className="mt-[6px] ml-[40px] w-[770px]">
              <Fit className="w-[709px]">Data derived from Federal Bureau of Investigation--arrests and police agencies, Texas 2017-2020</Fit>
              <div className="flex">
                <Fit className="w-[94px]">Source URL:</Fit>
                <Fit className="ml-[5px] w-[429px] text-[#4a93b0]" textClass="underline decoration-[#551a8b] decoration-1">https://crime-data-explorer.app.cloud.gov/pages/downloads</Fit>
              </div>
            </div>
            <div className="mt-[6px]">
              <Fit className="w-[722px]">Agency for Toxic Substances and Disease Registry (CDC)--Social Vulnerabilities Study Texas, 2019</Fit>
              <div className="flex">
                <Fit className="w-[94px]">Source URL:</Fit>
                <Fit className="ml-[5px] w-[666px] text-[#4a93b0]" textClass="underline decoration-[#551a8b] decoration-1">https://www.atsdr.cdc.gov/placeandhealth/svi/documentation/SVI_documentation_2018.html</Fit>
              </div>
            </div>
          </footer>
        </main>

        <div className="ml-[341px] flex h-[30px] w-[1733px] shrink-0 items-center bg-[#dedada] pt-[3px] pl-[22px]">
          <TableauMark />
          <div className="ml-[8px] flex w-[115px] items-center justify-between font-[Lato] text-[20px] leading-[24px] text-[#444]">
            <svg className="h-[16px] w-[13px]" viewBox="0 0 13 16" stroke="#444" strokeWidth="1.700">
              <path d="M0 7H13M6.500 0V16" />
            </svg>
            <span>a</span>
            <span>b</span>
            <span className="h-[19px] w-[2px] bg-[#444]" />
            <span>e</span>
            <span>a</span>
            <span>u</span>
          </div>
          <svg className="ml-[1198px] h-[24px] w-[356px]" viewBox="0 0 356 24" fill="none" stroke="#999" strokeWidth="1.500">
            <path d="M18 12H2M9 5L2 12L9 19M54 12H70M63 5L70 12L63 19" />
            <g stroke="#777">
              <path d="M116 7H101Q96 7 96 12Q96 16 101 16H120Q125 16 125 12Q125 8 121 7" />
              <path d="M115 3L121 7L115 11z" fill="#777" />
              <path d="M140 8H149L144.500 15z" fill="#777" stroke="none" />
            </g>
            <path d="M171 2V22M190 12H174M181 5L174 12L181 19" />
            <g stroke="#555">
              <circle cx="227" cy="13" r="3.500" />
              <circle cx="238" cy="6" r="3.500" />
              <circle cx="238" cy="19" r="3.500" />
              <path d="M230 11L235 8M230 15L235 17" />
              <path d="M283 15H276V3H295V15H288M285.500 8V18" />
              <path d="M282 17H289L285.500 22z" fill="#555" />
              <path d="M332 8H346V18H332zM328 8V4H333M345 4H350V8M350 18V22H345M333 22H328V18" />
            </g>
          </svg>
        </div>
      </div>
    </div>
  );
}
